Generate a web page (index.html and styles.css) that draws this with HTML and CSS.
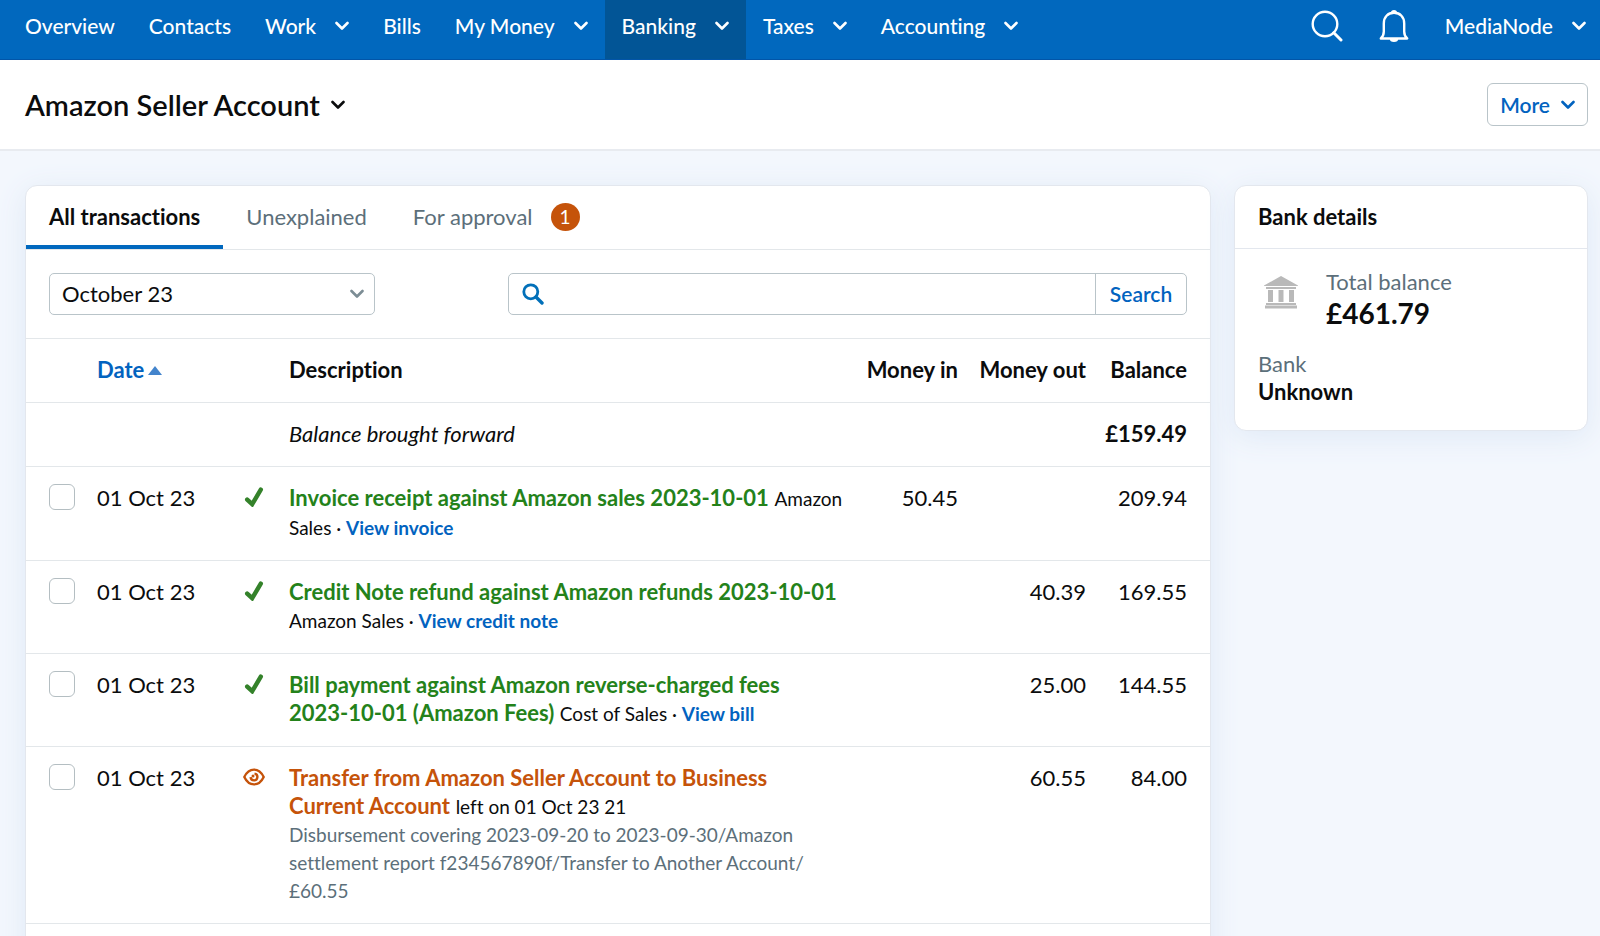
FILE: index.html
```
<!DOCTYPE html>
<html lang="en">

<head>
  <meta charset="UTF-8" />
  <meta name="viewport" content="width=device-width, initial-scale=1" />
  <title>Amazon Seller Account</title>
  <link rel="stylesheet" href="styles.css">
</head>

<body>
  <!-- shared icons -->
  <svg class="sprite" aria-hidden="true">
    <symbol id="chevron" viewBox="0 0 14 10">
      <path d="M1.5 2 7 7.5 12.5 2" fill="none" stroke="currentColor" stroke-width="2.6" stroke-linecap="round" stroke-linejoin="round" />
    </symbol>
    <symbol id="tick" viewBox="0 0 18 20">
      <path d="M2.2 12.6 7.2 17.2 15.8 2.6" fill="none" stroke="currentColor" stroke-width="4.4" stroke-linecap="round" />
    </symbol>
    <symbol id="eye" viewBox="0 0 22 18">
      <path d="M1.3 9C3.6 4.2 7 1.6 11 1.6S18.4 4.2 20.7 9C18.4 13.8 15 16.4 11 16.4S3.6 13.8 1.3 9Z" fill="none" stroke="currentColor" stroke-width="2.4" stroke-linejoin="round" />
      <path d="M11.5 5.6A3.4 3.4 0 1 1 7.6 9.2" fill="none" stroke="currentColor" stroke-width="2.4" />
      <circle cx="10" cy="8.1" r="1.5" fill="currentColor" />
    </symbol>
  </svg>

  <!-- top navigation -->
  <header class="topbar">
    <nav class="nav" aria-label="Main">
      <a href="#">Overview</a>
      <a href="#">Contacts</a>
      <a href="#">Work <svg class="chevron"><use href="#chevron" /></svg></a>
      <a href="#">Bills</a>
      <a href="#">My Money <svg class="chevron"><use href="#chevron" /></svg></a>
      <a href="#" class="active">Banking <svg class="chevron"><use href="#chevron" /></svg></a>
      <a href="#">Taxes <svg class="chevron"><use href="#chevron" /></svg></a>
      <a href="#">Accounting <svg class="chevron"><use href="#chevron" /></svg></a>
    </nav>
    <div class="tools">
      <button type="button" class="icon-btn" aria-label="Search">
        <svg width="32" height="32" viewBox="0 0 32 32" fill="none" stroke="currentColor" stroke-width="2.4" stroke-linecap="round">
          <circle cx="14" cy="14" r="12.3" />
          <path d="M22.8 22.8 30 30" stroke-width="3" />
        </svg>
      </button>
      <button type="button" class="icon-btn" aria-label="Notifications">
        <svg width="30" height="32" viewBox="0 0 30 32">
          <path d="M1.8 28.5C4 26.6 4.8 24.5 4.8 21.5V13.5C4.8 7 8.8 2.8 15 2.8S25.2 7 25.2 13.5V21.5C25.2 24.5 26 26.6 28.2 28.5Z" fill="none" stroke="currentColor" stroke-width="2.4" stroke-linejoin="round" />
          <path d="M12 2.5a3 2.5 0 0 1 6 0ZM10.8 29a4.2 3 0 0 0 8.4 0Z" fill="currentColor" />
        </svg>
      </button>
      <button type="button" class="account">MediaNode <svg class="chevron"><use href="#chevron" /></svg></button>
    </div>
  </header>

  <!-- page title -->
  <div class="titlebar">
    <h1><button type="button">Amazon Seller Account <svg class="chevron"><use href="#chevron" /></svg></button></h1>
    <button type="button" class="more">More <svg class="chevron"><use href="#chevron" /></svg></button>
  </div>

  <div class="page">
    <main class="panel">
      <div class="tabs">
        <a href="#" class="active">All transactions</a>
        <a href="#">Unexplained</a>
        <a href="#">For approval <span class="count">1</span></a>
      </div>

      <form class="filters">
        <div class="period">
          <select aria-label="Period">
            <option>October 23</option>
          </select>
          <svg class="chevron"><use href="#chevron" /></svg>
        </div>
        <div class="search">
          <svg width="22" height="22" viewBox="0 0 22 22" fill="none" stroke="currentColor" stroke-linecap="round">
            <circle cx="8.8" cy="8.8" r="7" stroke-width="2.8" />
            <path d="M14 14 20 20" stroke-width="3.4" />
          </svg>
          <input type="text" aria-label="Search transactions">
          <button type="submit">Search</button>
        </div>
      </form>

      <table class="transactions">
        <colgroup>
          <col class="c-check">
          <col class="c-date">
          <col class="c-status">
          <col>
          <col class="c-in">
          <col class="c-out">
          <col class="c-balance">
        </colgroup>
        <thead>
          <tr>
            <th></th>
            <th><a href="#">Date<span class="sort"></span></a></th>
            <th></th>
            <th>Description</th>
            <th class="num">Money in</th>
            <th class="num">Money out</th>
            <th class="num">Balance</th>
          </tr>
        </thead>
        <tbody>
          <tr>
            <td></td>
            <td></td>
            <td></td>
            <td><em>Balance brought forward</em></td>
            <td></td>
            <td></td>
            <td class="num total">£159.49</td>
          </tr>
          <tr>
            <td><input type="checkbox" aria-label="Select invoice receipt"></td>
            <td>01 Oct 23</td>
            <td><svg class="tick"><use href="#tick" /></svg></td>
            <td><a href="#" class="name">Invoice receipt against Amazon sales 2023-10-01</a> <small>Amazon Sales · <a href="#">View invoice</a></small></td>
            <td class="num">50.45</td>
            <td></td>
            <td class="num">209.94</td>
          </tr>
          <tr>
            <td><input type="checkbox" aria-label="Select credit note refund"></td>
            <td>01 Oct 23</td>
            <td><svg class="tick"><use href="#tick" /></svg></td>
            <td><a href="#" class="name">Credit Note refund against Amazon refunds 2023-10-01</a> <small>Amazon Sales · <a href="#">View credit note</a></small></td>
            <td></td>
            <td class="num">40.39</td>
            <td class="num">169.55</td>
          </tr>
          <tr>
            <td><input type="checkbox" aria-label="Select bill payment"></td>
            <td>01 Oct 23</td>
            <td><svg class="tick"><use href="#tick" /></svg></td>
            <td><a href="#" class="name">Bill payment against Amazon reverse-charged fees 2023-10-01 (Amazon Fees)</a> <small>Cost of Sales · <a href="#">View bill</a></small></td>
            <td></td>
            <td class="num">25.00</td>
            <td class="num">144.55</td>
          </tr>
          <tr>
            <td><input type="checkbox" aria-label="Select transfer"></td>
            <td>01 Oct 23</td>
            <td><svg class="eye"><use href="#eye" /></svg></td>
            <td>
              <a href="#" class="name review">Transfer from Amazon Seller Account to Business Current Account</a> <small>left on 01 Oct 23 21</small>
              <p class="note">Disbursement covering 2023-09-20 to 2023-09-30/Amazon settlement report f234567890f/Transfer to Another Account/<wbr>£60.55</p>
            </td>
            <td></td>
            <td class="num">60.55</td>
            <td class="num">84.00</td>
          </tr>
        </tbody>
      </table>
    </main>

    <aside class="panel">
      <h2>Bank details</h2>
      <div class="details">
        <div class="balance">
          <svg width="34" height="33" viewBox="0 0 34 33" fill="currentColor">
            <path d="M17 0 34 9.5V10H0V9.5ZM2 11H32V13H2ZM4 14H9V26H4ZM14.5 14H19.5V26H14.5ZM25 14H30V26H25ZM2 27H32V29H2ZM1 29.5H33V32.5H1Z" />
          </svg>
          <dl>
            <dt>Total balance</dt>
            <dd class="amount">£461.79</dd>
          </dl>
        </div>
        <dl>
          <dt>Bank</dt>
          <dd>Unknown</dd>
        </dl>
      </div>
    </aside>
  </div>
</body>

</html>
```
FILE: styles.css
```
* {
  box-sizing: border-box;
}

body,
h1,
h2,
p,
dl,
dd {
  margin: 0;
}

body {
  height: 100vh;
  overflow: hidden;
  background-color: #f3f7fd;
  color: #0b0c0d;
  font-family: Lato, "Liberation Sans", sans-serif;
  font-size: 22px;
  font-variant-ligatures: none;
  line-height: 28px;
}

a {
  color: #0263bf;
  text-decoration: none;
}

button,
input,
select {
  font: inherit;
  font-variant-ligatures: none;
  color: inherit;
}

button {
  padding: 0;
  border: 0;
  background: none;
  cursor: pointer;
}

.sprite {
  display: none;
}

.chevron {
  width: 14px;
  height: 10px;
}

/* top navigation */
.topbar {
  display: flex;
  justify-content: space-between;
  height: 60px;
  padding: 0 14px 0 8px;
  background-color: #0168be;
  border-bottom: 1px solid #0255a8;
  color: #fff;
  font-size: 21px;
  font-weight: 500;
}

.nav {
  display: flex;
}

.nav a {
  display: flex;
  align-items: center;
  gap: 19px;
  padding: 0 17px 7px;
  color: #fff;
}

.nav .active {
  background-color: #025596;
}

.tools {
  display: flex;
  align-items: center;
  gap: 36px;
  padding-bottom: 7px;
}

.icon-btn svg {
  display: block;
}

.account {
  display: flex;
  align-items: center;
  gap: 19px;
}

/* page title */
.titlebar {
  display: flex;
  justify-content: space-between;
  align-items: center;
  height: 91px;
  padding: 0 12px 0 25px;
  background-color: #fff;
  border-bottom: 2px solid #e8ebf0;
}

h1 {
  font-size: 29px;
  font-weight: 600;
}

h1 button {
  display: flex;
  align-items: center;
  gap: 11px;
}

.more {
  display: flex;
  align-items: center;
  gap: 11px;
  height: 43px;
  padding: 0 12px;
  border: 1px solid #b9c4c9;
  border-radius: 6px;
  color: #0263bf;
  font-size: 21px;
  font-weight: 600;
}

/* page columns */
.page {
  display: grid;
  grid-template-columns: 1fr 354px;
  align-items: start;
  gap: 23px;
  padding: 34px 12px 0 25px;
}

.panel {
  background-color: #fff;
  border: 1px solid #e3e7ee;
  border-radius: 12px;
  box-shadow: 0 6px 30px #dfe9f6;
}

main.panel {
  min-height: 100vh;
}

/* tabs */
.tabs {
  display: flex;
  height: 64px;
  border-bottom: 1px solid #e3e7ea;
}

.tabs a {
  display: flex;
  align-items: center;
  gap: 18px;
  padding: 2px 23px 0;
  border-bottom: 4px solid transparent;
  color: #5c6f7a;
}

.tabs .active {
  border-color: #0168be;
  color: #0b0c0d;
  font-weight: 700;
}

.count {
  width: 29px;
  height: 28px;
  border-radius: 50%;
  background-color: #c5530a;
  color: #fff;
  font-size: 19px;
  text-align: center;
}

/* filters */
.filters {
  display: flex;
  justify-content: space-between;
  gap: 24px;
  padding: 23px;
  border-bottom: 1px solid #e3e7ea;
}

.period {
  display: grid;
  align-items: center;
  width: 326px;
}

.period select,
.period .chevron {
  grid-area: 1 / 1;
}

.period select {
  appearance: none;
  height: 42px;
  padding: 0 12px;
  border: 1px solid #b9c4c9;
  border-radius: 5px;
  background-color: #fff;
}

.period .chevron {
  justify-self: end;
  margin-right: 11px;
  color: #7c8d95;
  pointer-events: none;
}

.search {
  display: flex;
  align-items: center;
  flex: 0 1 679px;
  height: 42px;
  padding-left: 13px;
  border: 1px solid #b9c4c9;
  border-radius: 5px;
  color: #0270b9;
}

.search input {
  flex: 1;
  min-width: 0;
  height: 100%;
  border: 0;
  background: none;
}

.search button {
  width: 91px;
  height: 100%;
  border-left: 1px solid #b9c4c9;
  color: #0263bf;
  font-size: 21px;
  font-weight: 600;
}

/* transactions */
.transactions {
  width: 100%;
  table-layout: fixed;
  border-collapse: collapse;
}

.c-check {
  width: 59px;
}

.c-date {
  width: 146px;
}

.c-status {
  width: 46px;
}

.c-in {
  width: 114px;
}

.c-out {
  width: 128px;
}

.c-balance {
  width: 112px;
}

.transactions th,
.transactions td {
  padding: 17px 12px 18px;
  border-bottom: 1px solid #e3e7ea;
  text-align: left;
  vertical-align: top;
}

.transactions th {
  font-weight: 700;
  white-space: nowrap;
}

.transactions th:first-child,
.transactions td:first-child {
  padding-left: 23px;
}

.transactions th:last-child,
.transactions td:last-child {
  padding-right: 23px;
}

.transactions .num {
  padding-left: 0;
  text-align: right;
}

.total {
  font-weight: 700;
}

.sort {
  display: inline-block;
  margin-left: 4px;
  border: 7px solid transparent;
  border-top: 0;
  border-bottom: 9px solid #4384cc;
  vertical-align: 3px;
}

.transactions input {
  appearance: none;
  display: block;
  width: 26px;
  height: 26px;
  margin: 0;
  border: 1px solid #b4bec2;
  border-radius: 6px;
  background-color: #fff;
}

.tick,
.eye {
  display: block;
  width: 22px;
  height: 20px;
  margin-top: 3px;
}

.tick {
  color: #34822a;
}

.eye {
  color: #c5530a;
}

.name {
  color: #24821a;
  font-weight: 700;
}

.review {
  color: #c5530a;
}

small {
  font-size: 19px;
}

small a {
  font-weight: 700;
}

.note {
  color: #5c6f7a;
  font-size: 19px;
}

/* bank details */
h2 {
  padding: 17px 23px;
  border-bottom: 1px solid #e3e7ee;
  font-size: 22px;
  font-weight: 700;
}

.details {
  display: grid;
  gap: 20px;
  padding: 19px 23px 24px;
}

.balance {
  display: flex;
  gap: 28px;
}

.balance svg {
  margin: 8px 0 0 6px;
  color: #b9b9b9;
}

dt {
  color: #5c6f7a;
}

dd {
  font-weight: 700;
}

.amount {
  font-size: 28px;
  line-height: 34px;
}
```
